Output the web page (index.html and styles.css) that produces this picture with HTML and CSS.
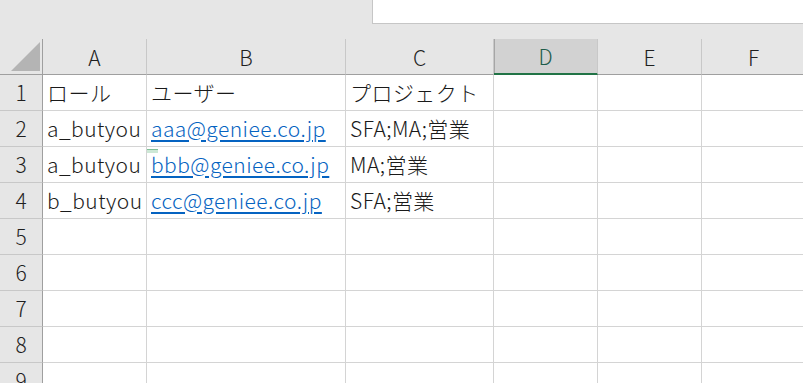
FILE: index.html
```html
<!DOCTYPE html>
<html lang="ja">
<head>
  <meta charset="UTF-8" />
  <title>Sheet1</title>
  <link rel="stylesheet" href="styles.css">
</head>
<body>
  <!-- 数式バー -->
  <div class="formula-bar">
    <div class="formula-box"></div>
  </div>

  <div class="sheet">
    <!-- 列見出し -->
    <div class="corner"><span class="corner-tri"></span></div>
    <div class="col-head">A</div>
    <div class="col-head">B</div>
    <div class="col-head">C</div>
    <div class="col-head selected">D</div>
    <div class="col-head">E</div>
    <div class="col-head">F</div>

    <!-- 1 -->
    <div class="row-head">1</div>
    <div class="cell">ロール</div>
    <div class="cell">ユーザー</div>
    <div class="cell">プロジェクト</div>
    <div class="cell"></div>
    <div class="cell"></div>
    <div class="cell"></div>

    <!-- 2 -->
    <div class="row-head">2</div>
    <div class="cell">a_butyou</div>
    <div class="cell"><a class="link" href="#">aaa@geniee.co.jp</a></div>
    <div class="cell">SFA;MA;営業</div>
    <div class="cell"></div>
    <div class="cell"></div>
    <div class="cell"></div>

    <!-- 3 -->
    <div class="row-head">3</div>
    <div class="cell">a_butyou</div>
    <div class="cell marked"><span class="marker"></span><a class="link" href="#">bbb@geniee.co.jp</a></div>
    <div class="cell">MA;営業</div>
    <div class="cell"></div>
    <div class="cell"></div>
    <div class="cell"></div>

    <!-- 4 -->
    <div class="row-head">4</div>
    <div class="cell">b_butyou</div>
    <div class="cell"><a class="link" href="#">ccc@geniee.co.jp</a></div>
    <div class="cell">SFA;営業</div>
    <div class="cell"></div>
    <div class="cell"></div>
    <div class="cell"></div>

    <div class="row-head">5</div>
    <div class="cell"></div><div class="cell"></div><div class="cell"></div><div class="cell"></div><div class="cell"></div><div class="cell"></div>

    <div class="row-head">6</div>
    <div class="cell"></div><div class="cell"></div><div class="cell"></div><div class="cell"></div><div class="cell"></div><div class="cell"></div>

    <div class="row-head">7</div>
    <div class="cell"></div><div class="cell"></div><div class="cell"></div><div class="cell"></div><div class="cell"></div><div class="cell"></div>

    <div class="row-head">8</div>
    <div class="cell"></div><div class="cell"></div><div class="cell"></div><div class="cell"></div><div class="cell"></div><div class="cell"></div>

    <div class="row-head last">9</div>
    <div class="cell"></div><div class="cell"></div><div class="cell"></div><div class="cell"></div><div class="cell"></div><div class="cell"></div>
  </div>
</body>
</html>
```

FILE: styles.css
```css
* {
  box-sizing: border-box;
}
body {
  margin: 0;
  background: #e6e6e6;
  font-family: "Noto Sans CJK JP", "Noto Sans", sans-serif;
  font-size: 21px;
  font-weight: 300;
  color: #1a1a1a;
  overflow: hidden;
}
.formula-bar {
  height: 39px;
  padding-left: 372px;
}
.formula-box {
  height: 24px;
  background: #fff;
  border-left: 1px solid #c6c6c6;
  border-bottom: 1px solid #c6c6c6;
}
.sheet {
  display: grid;
  grid-template-columns: 43px 104px 199px 148px 104px 104px 104px;
  grid-template-rows: repeat(10, 36px);
  width: 806px;
}
.corner {
  position: relative;
  background: #e6e6e6;
  border-right: 1px solid #9f9f9f;
  border-bottom: 1px solid #9f9f9f;
}
.corner-tri {
  position: absolute;
  left: 11px;
  bottom: 3px;
  width: 0;
  height: 0;
  border-left: 29px solid transparent;
  border-bottom: 29px solid #b4b4b4;
}
.col-head {
  display: flex;
  align-items: center;
  justify-content: center;
  background: #e6e6e6;
  border-right: 1px solid #c8c8c8;
  border-bottom: 1px solid #9f9f9f;
  color: #1f1f1f;
}
.col-head.selected {
  background: #d2d2d2;
  border-bottom: 2px solid #217346;
  color: #1e5c4a;
  box-shadow: inset 1px 0 0 #a6a6a6;
}
.row-head {
  display: flex;
  align-items: center;
  justify-content: center;
  background: #e6e6e6;
  border-right: 1px solid #9f9f9f;
  border-bottom: 1px solid #c8c8c8;
  color: #1f1f1f;
  padding-bottom: 2px;
}
.row-head.last {
  align-items: flex-start;
  padding-top: 2px;
}
.cell {
  display: flex;
  align-items: center;
  padding: 0 0 2px 4px;
  background: #fff;
  border-right: 1px solid #d4d4d4;
  border-bottom: 1px solid #d4d4d4;
  white-space: nowrap;
  overflow: hidden;
  letter-spacing: 0.45px;
}
.link {
  color: #0563c1;
  text-decoration: underline;
  text-underline-offset: 3px;
}
.marked {
  position: relative;
}
.marker {
  position: absolute;
  left: -1px;
  top: 2px;
  width: 12px;
  height: 4px;
  background: #cde8d6;
  box-shadow: inset 0 1px 0 #7fbf96;
}
```
